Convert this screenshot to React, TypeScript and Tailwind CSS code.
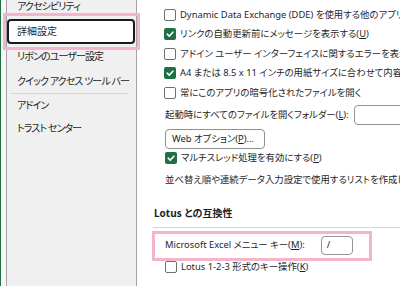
import React from 'react';

const FONT = "font-['Noto_Sans','Noto_Sans_CJK_JP',sans-serif] [font-feature-settings:'palt']";

function Check({ checked }: { checked?: boolean }) {
  if (checked) {
    return (
      <span className="w-[12px] h-[12px] shrink-0 rounded-[2px] bg-[#1e7145] flex items-center justify-center">
        <svg width="10" height="10" viewBox="0 0 10 10">
          <path d="M2.2 5.2 L4.2 7.1 L7.9 3.2" stroke="#fff" strokeWidth="1.6" fill="none" strokeLinecap="round" strokeLinejoin="round" />
        </svg>
      </span>
    );
  }
  return <span className="w-[12px] h-[12px] shrink-0 rounded-[2px] border border-[#6f6f6f] bg-white" />;
}

function CheckRow({ checked, children }: { checked?: boolean; children: React.ReactNode }) {
  return (
    <div className="h-[19.5px] flex items-center gap-[4px] pl-[27px] whitespace-nowrap">
      <Check checked={checked} />
      <span>{children}</span>
    </div>
  );
}

const U = ({ c }: { c: string }) => <span className="underline underline-offset-[1px]">{c}</span>;

const navItems = ['アクセシビリティ', '詳細設定', 'リボンのユーザー設定', 'クイック アクセス ツール バー'];

export default function App() {
  return (
    <div className={`w-[400px] h-[286px] overflow-hidden relative bg-white flex text-[#1f1f1f] ${FONT}`}>
      {/* left nav */}
      <div className="w-px bg-[#1e7145] shrink-0" />
      <div className="w-[5px] bg-[#f7f7f7] shrink-0" />
      <div className="w-[131px] shrink-0 bg-[#f0f0f0] border-x border-[#a3a3a3] text-[10px] tracking-[-0.9px] overflow-hidden">
        <div className="mt-[-6px]">
          {navItems.map((label) =>
            label === '詳細設定' ? (
              <div key={label} className="h-[25px] mr-px flex items-center pl-[8px] bg-white border-2 border-[#1a1a1a] rounded-[4px] tracking-normal">
                {label}
              </div>
            ) : (
              <div key={label} className="h-[25px] flex items-center pl-[10px] whitespace-nowrap">
                {label}
              </div>
            )
          )}
        </div>
        <div className="h-px bg-[#d6d6d6] ml-[3px] mr-[8px] -mt-px" />
        <div className="h-[22px] flex items-center pl-[10px]">アドイン</div>
        <div className="h-[24px] flex items-center pl-[10px]">トラスト センター</div>
      </div>

      {/* right content */}
      <div className="flex-1 min-w-0 text-[9.4px] flex flex-col pt-[5px]">
        <CheckRow>Dynamic Data Exchange (DDE) を使用する他のアプリケーションを無視する</CheckRow>
        <CheckRow checked>
          リンクの自動更新前にメッセージを表示する(<U c="U" />)
        </CheckRow>
        <CheckRow>アドイン ユーザー インターフェイスに関するエラーを表示する</CheckRow>
        <CheckRow checked>A4 または 8.5 x 11 インチの用紙サイズに合わせて内容を調整する</CheckRow>
        <CheckRow>常にこのアプリの暗号化されたファイルを開く</CheckRow>

        <div className="mt-[2.5px] h-[20px] flex items-center pl-[28px] whitespace-nowrap">
          <span>
            起動時にすべてのファイルを開くフォルダー(<U c="L" />):
          </span>
          <span className="ml-[5px] h-[20px] w-[80px] shrink-0 rounded-[4px] border border-[#959595] bg-white" />
        </div>

        <div className="mt-[4px] pl-[28px]">
          <div className="w-[100px] h-[20px] rounded-[4px] border border-[#8f8f8f] bg-[#fdfdfd] flex items-center pl-[6px] whitespace-nowrap">
            Web オプション(<U c="P" />)...
          </div>
        </div>

        <div className="h-[18px] flex items-center gap-[4px] pl-[28px] whitespace-nowrap">
          <Check checked />
          <span>
            マルチスレッド処理を有効にする(<U c="P" />)
          </span>
        </div>

        <div className="mt-[4px] h-[18px] flex items-center pl-[28px] whitespace-nowrap">
          並べ替え順や連続データ入力設定で使用するリストを作成します
        </div>

        <div className="mt-[15px] h-[18px] flex items-center pl-[17px] text-[10px] font-bold whitespace-nowrap">Lotus との互換性</div>
        <div className="mt-[5px] h-px bg-[#d4d4d4] ml-[16px]" />

        <div className="mt-[8px] h-[19px] flex items-center pl-[28px] whitespace-nowrap">
          <span>
            Microsoft Excel メニュー キー(<U c="M" />):
          </span>
          <span className="ml-[16px] h-[19px] w-[32px] shrink-0 rounded-[4px] border border-[#959595] bg-white flex items-center pl-[5px]">
            /
          </span>
        </div>

        <div className="mt-[2px] h-[20px] flex items-center gap-[4px] pl-[28px] whitespace-nowrap">
          <Check />
          <span>
            Lotus 1-2-3 形式のキー操作(<U c="K" />)
          </span>
        </div>
      </div>

      {/* annotation highlights */}
      <div className="absolute left-[3px] top-[13px] w-[137px] h-[37px] border-[3px] border-[#f3b4cc] pointer-events-none" />
      <div className="absolute left-[152px] top-[231px] w-[220px] h-[30px] border-[3px] border-[#f3b4cc] pointer-events-none" />
    </div>
  );
}
